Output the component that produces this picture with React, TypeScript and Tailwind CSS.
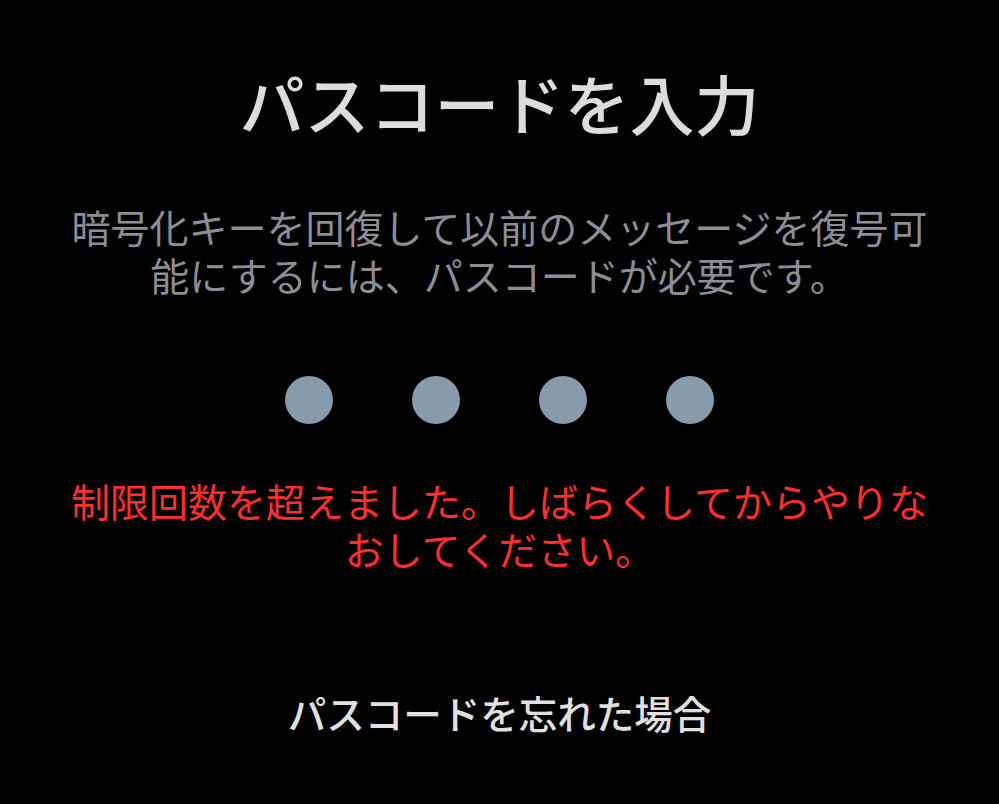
export default function App() {
  const dots = [0, 1, 2, 3];

  return (
    <div
      className="bg-black min-h-screen w-full flex flex-col items-center pt-[70px] text-center"
      style={{ fontFamily: '"Noto Sans CJK JP", "Noto Sans", sans-serif' }}
    >
      <h1 className="text-[65px] leading-[64px] font-medium text-[#dcdcdc]">パスコードを入力</h1>

      <p className="mt-[68px] w-[870px] text-[39px] leading-[48px] text-[#8b8e94]">
        暗号化キーを回復して以前のメッセージを復号可能にするには、パスコードが必要です。
      </p>

      <div className="mt-[78px] flex gap-[79px]">
        {dots.map(i => (
          <div key={i} className="w-[48px] h-[48px] rounded-full bg-[#869bac]" />
        ))}
      </div>

      <p className="mt-[52px] w-[870px] text-[39px] leading-[48px] text-[#ff2f2f]">
        制限回数を超えました。しばらくしてからやりなおしてください。
      </p>

      <button className="mt-[120px] text-[38.5px] leading-[40px] font-medium text-[#e0e0e0]">
        パスコードを忘れた場合
      </button>
    </div>
  );
}
